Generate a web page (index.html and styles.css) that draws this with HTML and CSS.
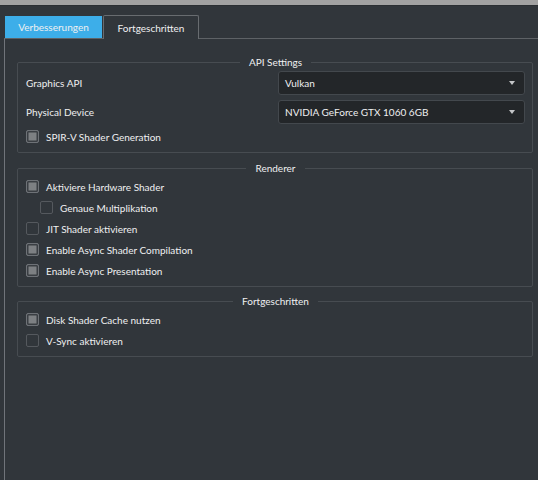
FILE: index.html
```html
<!DOCTYPE html>
<html lang="de">
<head>
  <meta charset="UTF-8" />
  <title>Grafik</title>
  <link rel="stylesheet" href="styles.css">
</head>
<body>
  <div class="topbar"></div>

  <div class="tabs">
    <div class="tab tab-blue">Verbesserungen</div>
    <div class="tab tab-active">Fortgeschritten</div>
  </div>

  <div class="pane">
    <fieldset class="group group-api">
      <legend>API Settings</legend>
      <div class="form-grid">
        <span class="label">Graphics API</span>
        <div class="combo">Vulkan</div>
        <span class="label">Physical Device</span>
        <div class="combo">NVIDIA GeForce GTX 1060 6GB</div>
      </div>
      <div class="check checked">SPIR-V Shader Generation</div>
    </fieldset>

    <fieldset class="group">
      <legend>Renderer</legend>
      <div class="check checked">Aktiviere Hardware Shader</div>
      <div class="check indent">Genaue Multiplikation</div>
      <div class="check">JIT Shader aktivieren</div>
      <div class="check checked">Enable Async Shader Compilation</div>
      <div class="check checked">Enable Async Presentation</div>
    </fieldset>

    <fieldset class="group">
      <legend>Fortgeschritten</legend>
      <div class="check checked">Disk Shader Cache nutzen</div>
      <div class="check">V-Sync aktivieren</div>
    </fieldset>
  </div>
</body>
</html>
```

FILE: styles.css
```css
html, body {
  margin: 0;
  padding: 0;
  height: 100%;
  background-color: #31363b;
  color: #eff0f1;
  font-family: Lato, "Noto Sans", sans-serif;
  font-size: 10px;
  overflow: hidden;
}

body {
  display: flex;
  flex-direction: column;
}

.topbar {
  height: 5px;
  flex: none;
  background-color: #a2a2a2;
  border-bottom: 1px solid #2b2f33;
}

.tabs {
  display: flex;
  align-items: flex-end;
  padding-left: 5px;
  margin-top: 9px;
}

.tab {
  display: flex;
  align-items: center;
  justify-content: center;
  box-sizing: border-box;
}

.tab-blue {
  width: 97px;
  height: 22px;
  background-color: #3daee9;
  color: #eff0f1;
}

.tab-active {
  width: 96px;
  height: 24px;
  margin-left: 1px;
  border: 1px solid #686c70;
  border-bottom: none;
  border-radius: 2px 2px 0 0;
  background-color: #31363b;
  position: relative;
  z-index: 1;
  margin-bottom: -1px;
}

.pane {
  flex: 1;
  min-height: 0;
  margin-left: 4px;
  border-top: 1px solid #5e6266;
  border-left: 1px solid #70747a;
  padding-top: 16px;
}

.group {
  margin: 0 5px 7px 12px;
  padding: 1px 7px 5px 8px;
  border: 1px solid #474c51;
  border-radius: 2px;
  min-width: 0;
}

.group-api {
  padding-top: 2px;
  margin-bottom: 8px;
}

.group legend {
  margin: 0 auto;
  padding: 0 9px;
  line-height: 14px;
}

.form-grid {
  display: grid;
  grid-template-columns: 1fr 247px;
  row-gap: 5px;
  align-items: center;
  margin-bottom: 2px;
}

.combo {
  position: relative;
  height: 24px;
  line-height: 22px;
  box-sizing: border-box;
  padding-left: 6px;
  background-color: #232629;
  border: 1px solid #43484d;
  border-radius: 3px;
}

.combo::after {
  content: "";
  position: absolute;
  right: 9px;
  top: 9px;
  border-left: 3.5px solid transparent;
  border-right: 3.5px solid transparent;
  border-top: 4px solid #c4c6c8;
}

.check {
  display: flex;
  align-items: center;
  height: 21px;
  gap: 7px;
}

.check::before {
  content: "";
  box-sizing: border-box;
  width: 13px;
  height: 13px;
  flex: none;
  border: 1px solid #55595e;
  border-radius: 2px;
  background-color: #31363b;
}

.check.checked::before {
  border-color: #6e7277;
  background-color: #7d8083;
  box-shadow: inset 0 0 0 1.5px #3a3e43;
}

.check.indent {
  padding-left: 14px;
}
```
